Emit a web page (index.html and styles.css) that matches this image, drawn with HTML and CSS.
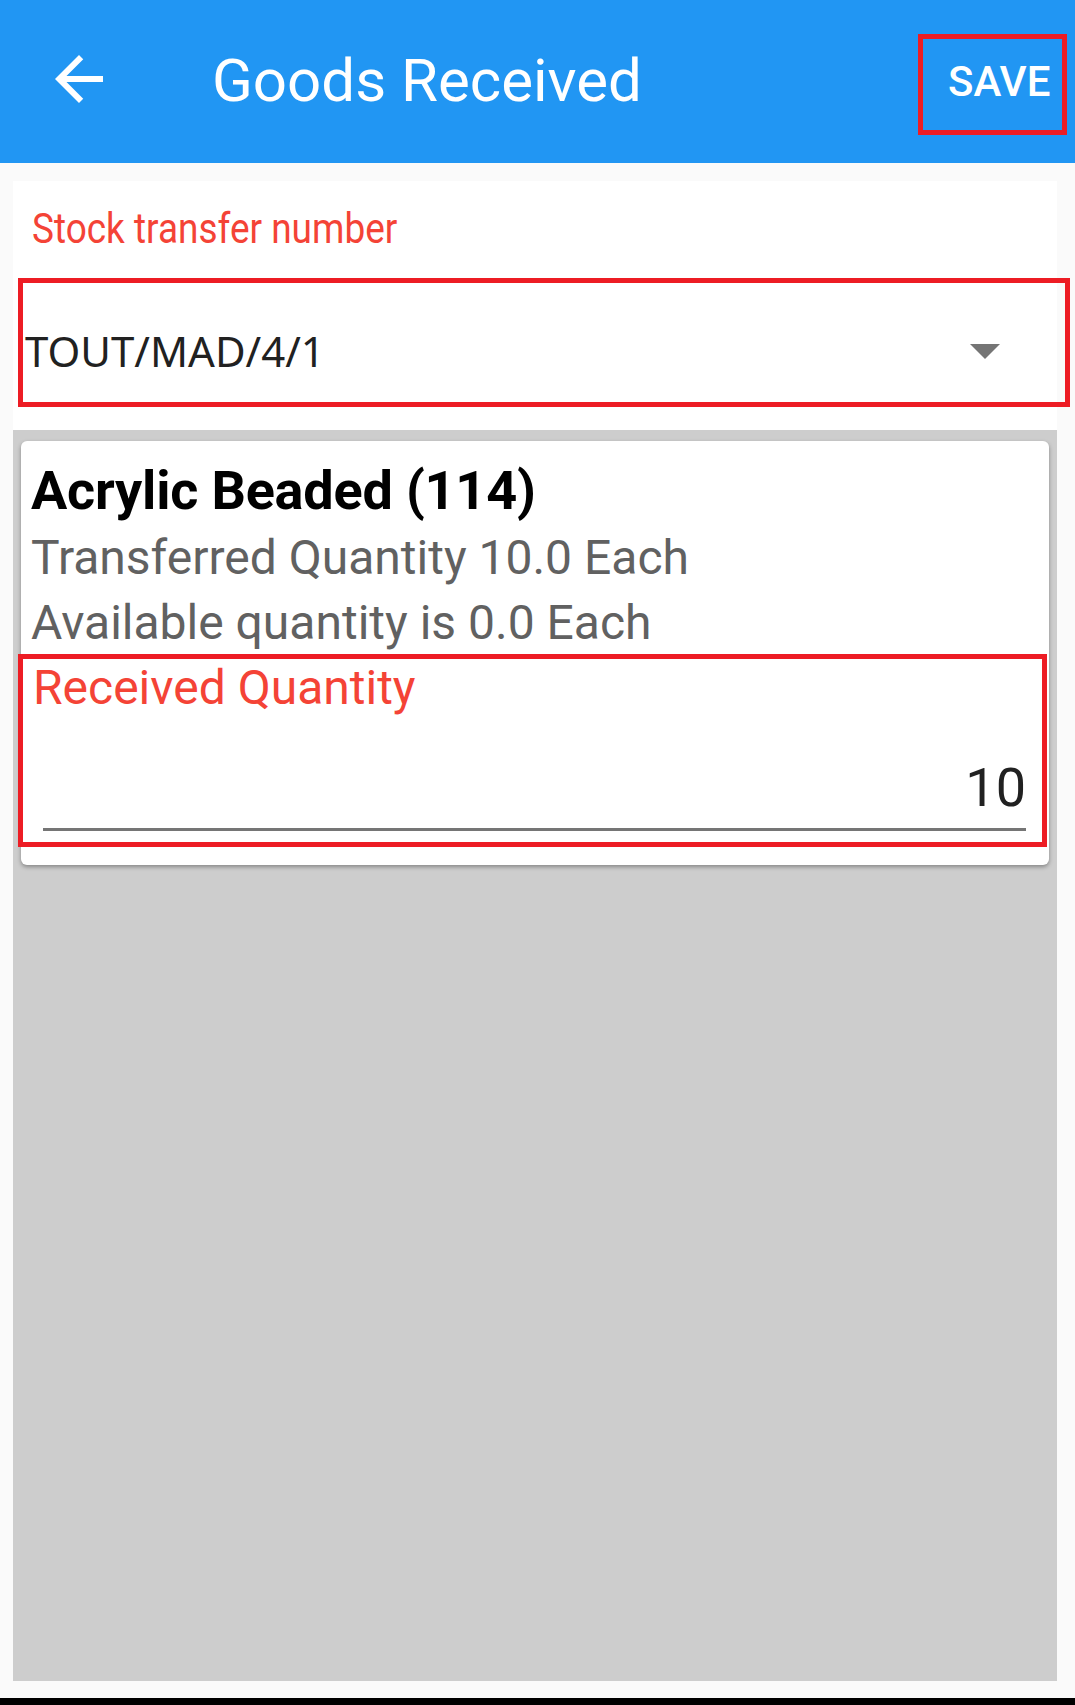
FILE: index.html
```html
<!DOCTYPE html>
<html lang="en">

<head>
    <meta charset="UTF-8">
    <meta name="viewport" content="width=device-width, initial-scale=1.0">
    <title>Goods Received</title>
    <link rel="stylesheet" href="styles.css">
</head>

<body>
    <div class="toolbar">
        <svg class="back" viewBox="0 0 24 24">
            <path d="M20 11H7.83l5.59-5.59L12 4l-8 8 8 8 1.41-1.41L7.83 13H20v-2z" fill="currentColor"></path>
        </svg>
        <div class="title">Goods Received</div>
        <div class="save mark">SAVE</div>
    </div>

    <div class="content">
        <div class="head">
            <div class="hint"><span>Stock transfer number</span></div>
            <div class="spinner mark">
                <span class="value">TOUT/MAD/4/1</span>
                <span class="arrow"></span>
            </div>
        </div>

        <div class="list">
            <div class="card">
                <div class="name">Acrylic Beaded (114)</div>
                <div class="line">Transferred Quantity 10.0 Each</div>
                <div class="line">Available quantity is 0.0 Each</div>
                <div class="field mark">
                    <div class="label">Received Quantity</div>
                    <div class="input">10</div>
                    <div class="under"></div>
                </div>
            </div>
        </div>
    </div>

    <div class="navbar"></div>
</body>

</html>
```

FILE: styles.css
```css
body {
    margin: 0;
    height: 100vh;
    display: flex;
    flex-direction: column;
    background: #fafafa;
    font-family: Roboto, 'Liberation Sans', sans-serif;
}

.mark {
    border: 5px solid #ed1c24;
    box-sizing: border-box;
}

.toolbar {
    height: 163px;
    flex-shrink: 0;
    background: #2196f3;
    color: #fff;
    display: flex;
    align-items: flex-start;
}

.back {
    width: 72px;
    height: 72px;
    margin: 43px 0 0 43px;
}

.title {
    font-size: 60px;
    line-height: 72px;
    margin: 45px 0 0 97px;
}

.save {
    margin: 34px 8px 0 auto;
    width: 149px;
    height: 101px;
    padding: 22px 0 0 25px;
    font-size: 42px;
    line-height: 42px;
    font-weight: 500;
}

.content {
    flex: 1;
    display: flex;
    flex-direction: column;
    width: 1044px;
    margin: 18px 0 17px 13px;
}

.head {
    background: #fff;
    height: 249px;
    padding-top: 23px;
    box-sizing: border-box;
}

.hint {
    color: #f44336;
    font-size: 42px;
    line-height: 50px;
    padding-left: 19px;
}

/* the hint is drawn in a condensed face on the device */
.hint span {
    display: inline-block;
    transform: scaleX(0.88);
    transform-origin: left;
}

.spinner {
    margin: 24px 0 0 5px;
    width: 1052px;
    height: 129px;
    padding: 17px 0 0 2px;
    display: flex;
    align-items: center;
}

.value {
    font-family: 'Noto Sans', sans-serif;
    font-size: 42px;
    line-height: 50px;
    color: #212121;
}

.arrow {
    margin: 0 65px 0 auto;
    border-left: 15px solid transparent;
    border-right: 15px solid transparent;
    border-top: 15px solid #757575;
}

.list {
    flex: 1;
    background: #cdcdcd;
    padding: 11px 8px;
}

.card {
    background: #fff;
    border-radius: 6px;
    box-shadow: 0 2px 4px rgba(0, 0, 0, .35);
    padding: 16px 0 18px 10px;
}

.name {
    font-size: 54px;
    font-weight: 700;
    line-height: 68px;
    letter-spacing: -0.2px;
    color: #000;
}

.line {
    font-size: 48px;
    line-height: 65px;
    color: #616161;
}

.field {
    margin: -1px 2px 0 -13px;
    padding: 1px 16px 11px 10px;
}

.field .label {
    color: #f44336;
    font-size: 48px;
    line-height: 56px;
}

.input {
    text-align: right;
    font-size: 54px;
    line-height: 60px;
    color: #212121;
    margin-top: 42px;
}

.under {
    height: 3px;
    background: #757575;
    margin: 10px 0 0 10px;
}

.navbar {
    height: 7px;
    flex-shrink: 0;
    background: #000;
}
```
